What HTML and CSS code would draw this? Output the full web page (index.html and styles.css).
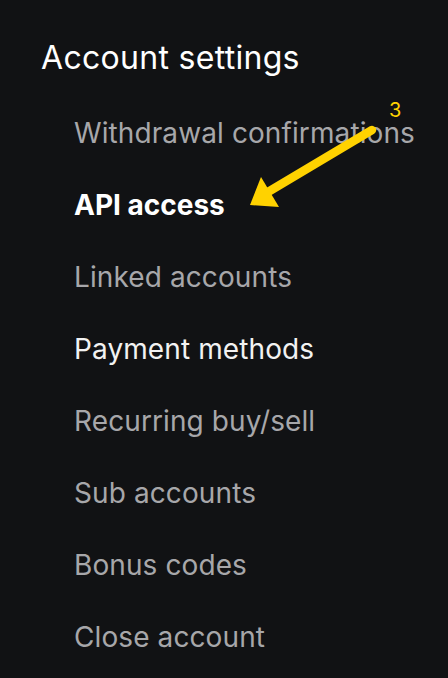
FILE: index.html
```html
<!DOCTYPE html>
<html lang="en">
<head>
<meta charset="utf-8">
<title>Account settings</title>
<link rel="stylesheet" href="styles.css">
</head>
<body>
<nav class="settings">
  <h2 class="settings-title">Account settings</h2>
  <ul class="settings-list">
    <li class="item">Withdrawal confirmations</li>
    <li class="item item-active">API access</li>
    <li class="item">Linked accounts</li>
    <li class="item item-bright">Payment methods</li>
    <li class="item">Recurring buy/sell</li>
    <li class="item">Sub accounts</li>
    <li class="item">Bonus codes</li>
    <li class="item">Close account</li>
  </ul>
</nav>
<div class="annotation">
  <span class="annotation-num">3</span>
  <svg class="annotation-arrow" width="448" height="678" viewBox="0 0 448 678">
    <line x1="372" y1="130" x2="268" y2="192" stroke="#ffd200" stroke-width="8.5" stroke-linecap="round"/>
    <polygon points="250,205 261,177 279,207" fill="#ffd200"/>
  </svg>
</div>
</body>
</html>
```
FILE: styles.css
```css
html, body {
  margin: 0;
  padding: 0;
  background: #111214;
}
body {
  width: 448px;
  height: 678px;
  overflow: hidden;
  position: relative;
  font-family: Inter, "Noto Sans", sans-serif;
}
.settings {
  padding: 38px 0 0 41px;
}
.settings-title {
  margin: 0 0 19px 0;
  font-size: 32px;
  line-height: 40px;
  font-weight: 400;
  letter-spacing: 0.3px;
  color: #ffffff;
}
.settings-list {
  list-style: none;
  margin: 0;
  padding: 0 0 0 33px;
}
.item {
  font-size: 28px;
  line-height: 72px;
  font-weight: 400;
  letter-spacing: 0.1px;
  color: #a7a7aa;
  white-space: nowrap;
}
.item-active {
  font-weight: 700;
  letter-spacing: 0;
  color: #ffffff;
}
.item-bright {
  color: #f2f2f2;
}
.annotation {
  position: absolute;
  inset: 0;
  pointer-events: none;
}
.annotation-arrow {
  position: absolute;
  left: 0;
  top: 0;
}
.annotation-num {
  position: absolute;
  left: 389px;
  top: 100px;
  font-size: 20px;
  line-height: 20px;
  color: #ffd200;
}
```
